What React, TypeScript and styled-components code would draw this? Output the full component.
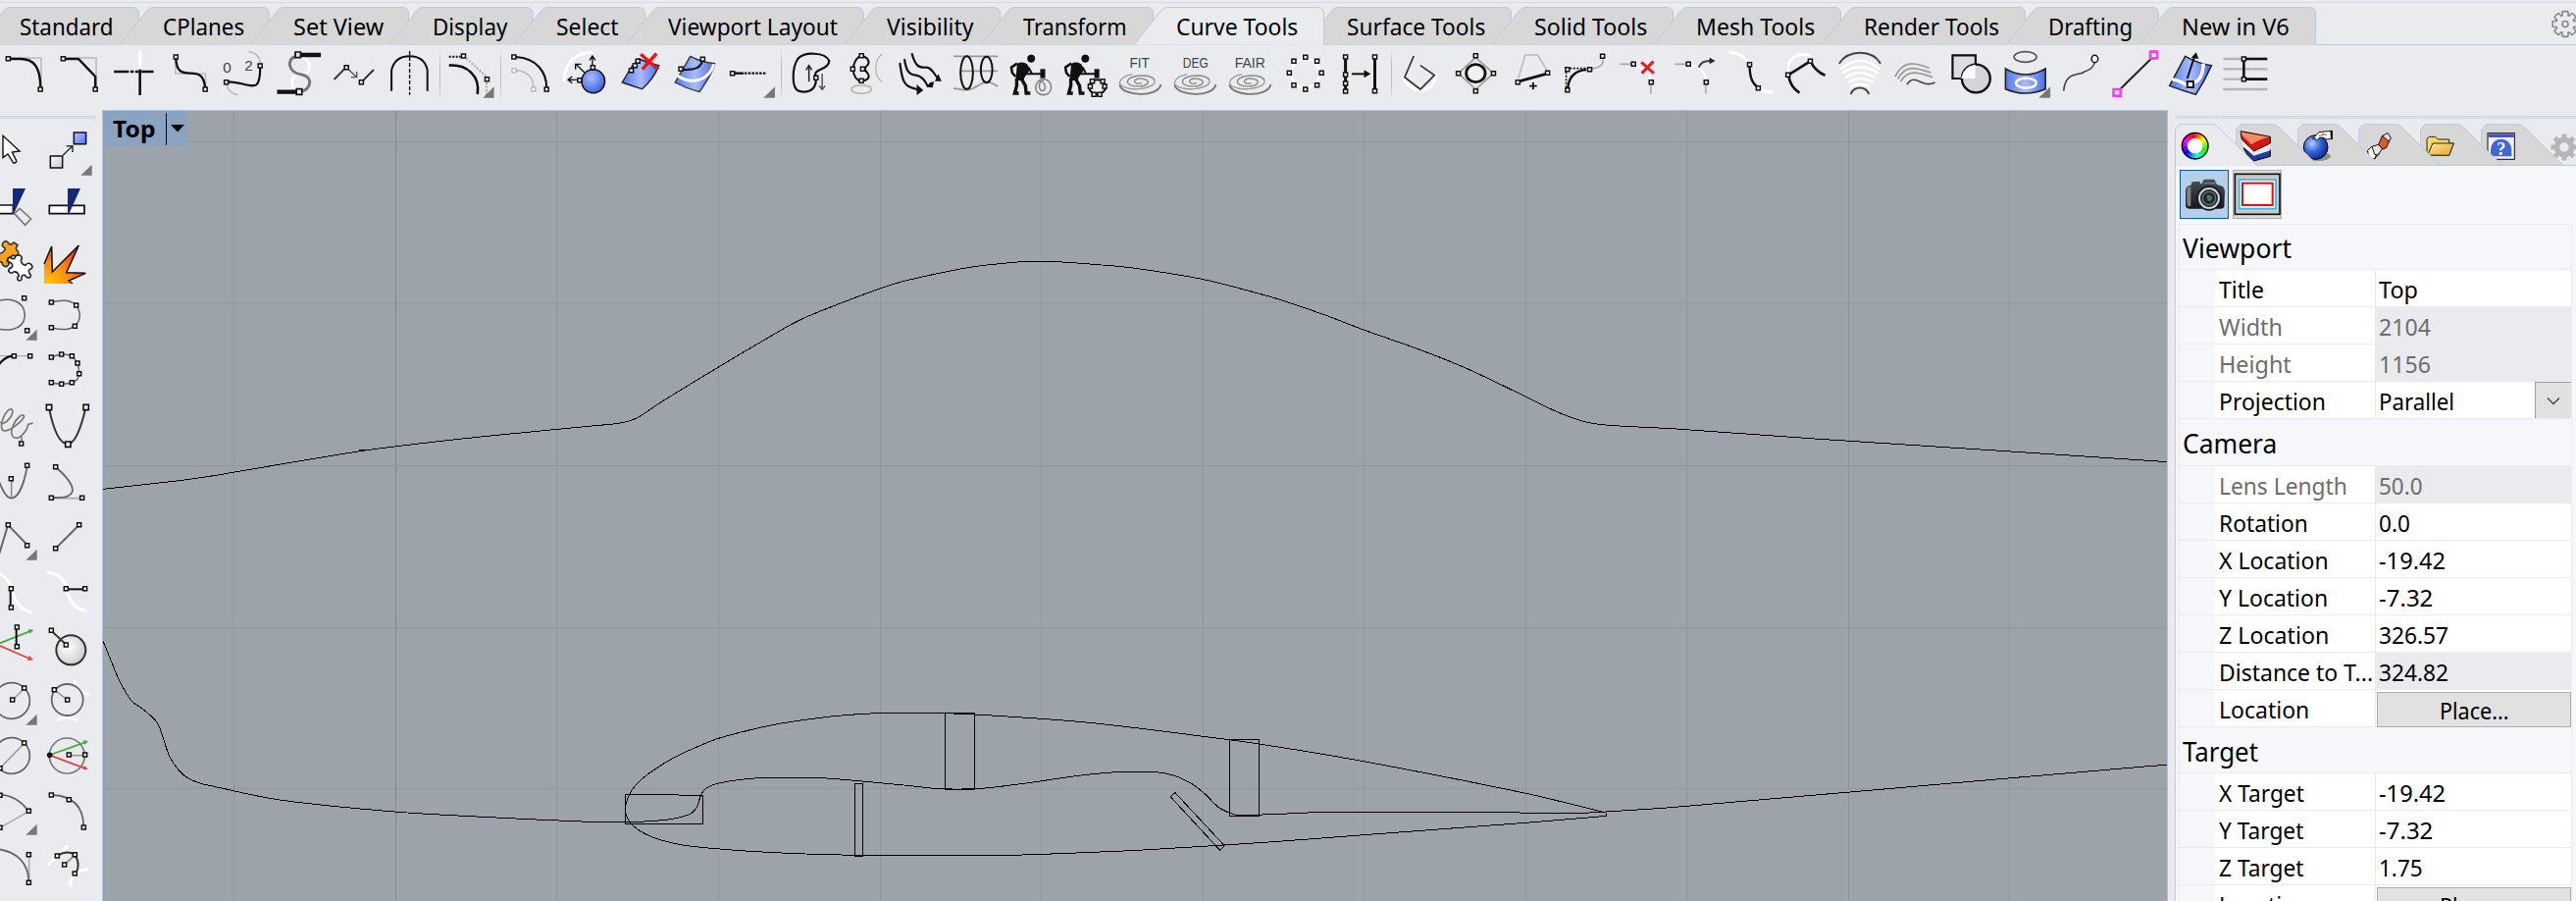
import React, { useLayoutEffect, useRef, useState } from 'react';
import styled, { createGlobalStyle } from 'styled-components';

const Global = createGlobalStyle`
  * { box-sizing: border-box; }
  body { margin: 0; background: #eaebef; color: #000; overflow: hidden;
    font-family: "Noto Sans", "Open Sans", sans-serif; font-size: 24px; line-height: 1; }
`;

const face = '#eaebef';
const edge = '#c0c8dc';

/* ---------- text condensed to a known width ---------- */
const Condensed = styled.span`
  display: inline-block;
  white-space: nowrap;
  transform-origin: left center;
`;
const Slot = styled.span<{ $w: number }>`
  display: inline-block;
  width: ${p => p.$w}px;
  white-space: nowrap;
`;
function Fit({ w, children }: { w: number; children: string }) {
  const ref = useRef<HTMLSpanElement>(null);
  const [k, setK] = useState(1);
  useLayoutEffect(() => {
    if (ref.current) setK(w / ref.current.offsetWidth);
  }, [w, children]);
  return (
    <Slot $w={w}>
      <Condensed ref={ref} style={{ transform: `scaleX(${k})` }}>{children}</Condensed>
    </Slot>
  );
}

/* ---------- page ---------- */
const Window = styled.div`
  display: flex;
  flex-direction: column;
  width: 2626px;
  height: 918px;
  overflow: hidden;
  background: ${face};
`;
const TabStrip = styled.div`
  display: flex;
  justify-content: space-between;
  height: 46px;
  border-bottom: 1px solid ${edge};
`;
const TopRule = styled.div`
  height: 1px;
  flex: none;
  background: #d5d9e7;
  margin: 2px 0 -3px;
`;
const Tabs = styled.div`
  display: flex;
  padding-top: 7px;
  margin-left: -24px;
`;
const Tab = styled.div<{ $on: boolean }>`
  display: grid;
  height: ${p => (p.$on ? 39 : 38)}px;
  z-index: ${p => (p.$on ? 2 : 0)};
  & + & { margin-left: -20px; }
  > * { grid-area: 1 / 1; }
  > svg { display: block; }
`;
const TabText = styled.div`
  padding: 4px 26.5px 0 43.5px;
  line-height: 32px;
`;
const GearSlot = styled.div`
  padding: 10px 0 0;
  width: 25px;
  overflow: hidden;
`;

const tabs: [string, number][] = [
  ['Standard', 96], ['CPlanes', 83], ['Set View', 92], ['Display', 76.5], ['Select', 64],
  ['Viewport Layout', 173], ['Visibility', 89], ['Transform', 106], ['Curve Tools', 124],
  ['Surface Tools', 141], ['Solid Tools', 115], ['Mesh Tools', 121], ['Render Tools', 138],
  ['Drafting', 86], ['New in V6', 110],
];

function TopTab({ name, w, on }: { name: string; w: number; on: boolean }) {
  const W = w + 70;
  return (
    <Tab $on={on}>
      <svg width={W} height={39}>
        <path d={`M0 38.5L28 3.5Q30.500 .5 34 .5H${W - 7}Q${W - 0.5} .5 ${W - 0.5} 7V39`} fill={on ? face : '#d7d7d7'} stroke={edge} />
      </svg>
      <TabText><Fit w={w}>{name}</Fit></TabText>
    </Tab>
  );
}

function Gear() {
  const teeth = Array.from({ length: 8 }, (_, i) => i * 45);
  return (
    <svg width={28} height={29} viewBox="0 0 28 29">
      {teeth.map(t => <rect key={t} x={11} y={1.6} width={6} height={6} rx={1} fill={face} stroke="#858585" strokeWidth={1.6} transform={`rotate(${t} 14 14.500)`} />)}
      <circle cx={14} cy={14.500} r={9.400} fill={face} stroke="#858585" strokeWidth={1.6} />
      {teeth.map(t => <rect key={t} x={11.800} y={4} width={4.400} height={4} fill={face} transform={`rotate(${t} 14 14.500)`} />)}
      <circle cx={14} cy={14.500} r={3} fill="none" stroke="#858585" strokeWidth={1.6} />
    </svg>
  );
}

/* ---------- tool icons ---------- */
const Toolbar = styled.div`
  display: flex;
  height: 66px;
  flex: none;
  padding-top: 2px;
  margin-left: -3px;
`;
const Divider = styled.div`
  width: 1px;
  height: 52px;
  margin: 2px 2px 0 3px;
  background: linear-gradient(${face}, #bdbec3 30%, #bdbec3 70%, ${face});
`;
const Drawing = styled.svg`
  display: block;
  flex: none;
  width: 56px;
  height: 56px;
  overflow: hidden;
  path, rect, ellipse, line, polygon { vector-effect: non-scaling-stroke; }
`;

type Kids = { children?: React.ReactNode };
/* Toolbar glyphs use a grid of 2.376 x 3 units per pixel, palette glyphs one of 3 x 3. */
const Tool = ({ x, u = 2.376, children }: { x: number; u?: number } & Kids) => (
  <Drawing viewBox={`${x} 144 ${56 * u} 168`} preserveAspectRatio="none">{children}</Drawing>
);
const P = ({ d, c = '#111', w = 1.6, f = 'none', dash }: { d: string; c?: string; w?: number; f?: string; dash?: string }) => (
  <path d={d} stroke={c} strokeWidth={w} fill={f} strokeDasharray={dash} />
);
const H = ({ x, y, c = '#111' }: { x: number; y: number; c?: string }) => (
  <rect x={x - 4.8} y={y - 6} width={9.6} height={12} fill="#fff" stroke={c} strokeWidth={1.5} />
);
const Q = ({ x, y }: { x: number; y: number }) => (
  <rect x={x - 6} y={y - 6} width={12} height={12} fill="#fff" stroke="#111" strokeWidth={1.5} />
);
const E = ({ x, y, rx, ry, c = '#111', w = 1.6, f = 'none' }: { x: number; y: number; rx: number; ry: number; c?: string; w?: number; f?: string }) => (
  <ellipse cx={x} cy={y} rx={rx} ry={ry} stroke={c} strokeWidth={w} fill={f} />
);
const T = ({ x, y, s, w, children }: { x: number; y: number; s: number; w: number; children: string }) => (
  <text transform={`translate(${x} ${y}) scale(2.376 3)`} fontFamily="Liberation Sans" fontSize={s} textLength={w} lengthAdjust="spacingAndGlyphs" fill="#444">{children}</text>
);
const Spiral = ({ x }: { x: number }) => (
  <g>
    <P c="#8a8a8a" w={1.4} d={`M${x + 4} 254C${x - 6} 258 ${x - 16} 252 ${x - 12} 245C${x - 4} 236 ${x + 20} 240 ${x + 20} 252C${x + 16} 268 ${x - 26} 268 ${x - 30} 250C${x - 28} 226 ${x + 34} 224 ${x + 36} 248`} />
    <P c="#9a9a9a" w={1.4} d={`M${x + 36} 248C${x + 36} 276 ${x - 40} 282 ${x - 49} 254C${x - 46} 238 ${x - 34} 230 ${x - 18} 227`} />
    <P c="#777" w={1.8} d={`M${x - 49} 260C${x - 42} 294 ${x + 44} 300 ${x + 51} 258`} />
  </g>
);
const Worker = ({ x }: { x: number }) => (
  <g>
    <E x={x} y={179} rx={8.500} ry={11} f="#111" w={1} />
    <path d={`M${x - 34} 194Q${x - 20} 186 ${x - 10} 196L${x - 2} 212L${x - 16} 236L${x - 18} 246H${x - 38}L${x - 36} 222Z`} fill="#111" />
    <P w={2.6} d={`M${x - 34} 194L${x - 48} 206L${x - 46} 222L${x - 38} 234`} />
    <P w={3.4} d={`M${x - 35} 240L${x - 35} 262L${x - 40} 285H${x - 30}M${x - 24} 240L${x - 14} 262L${x - 12} 285H${x - 2}`} />
    <P w={2} d={`M${x - 6} 206L${x + 2} 226H${x + 24}M${x - 20} 226H${x + 4}`} />
    <rect x={x + 22} y={211} width={12} height={28} fill="#111" />
  </g>
);

const toolGroups: React.ReactNode[][] = [
  [
    <Tool x={-7}><P c="#bbb" d="M20 177H100V270" /><P w={2.4} d="M26 180H50C82 180 98 205 98 265" /><H x={20} y={179} /><H x={98} y={273} /></Tool>,
    <Tool x={126}><P c="#bbb" d="M153 177H233V270" /><P w={2.4} d="M158 180H190L231 234V268" /><H x={153} y={179} /><H x={231} y={273} /></Tool>,
    <Tool x={259}><P c="#fff" w={3} d="M339 156V215" /><P w={2.6} d="M339 212V291" /><P w={2.6} d="M276 219H304M344 219H372" /><P w={2.6} dash="3.500 1.500" d="M304 219H344" /></Tool>,
    <Tool x={392}><P c="#bbb" d="M425 180V225H498V268" /><P w={2.4} d="M426 180C428 215 436 224 462 224C488 224 494 238 497 268" /><H x={426} y={174} /><H x={497} y={273} /></Tool>,
    <Tool x={525}><P c="#bbb" d="M602 158Q630 162 630 196M548 258Q556 288 576 290" /><P w={2.2} d="M552 250C590 252 610 270 622 258C630 246 630 220 630 206" /><H x={548} y={251} /><H x={630} y={201} /><T x={540} y={222} s={15} w={8.500}>0</T><T x={592} y={215} s={15} w={8.500}>2</T></Tool>,
    <Tool x={658}><P c="#fff" w={2.5} d="M722 172C760 176 756 228 730 228C700 228 700 272 725 276" /><P c="#777" w={3} d="M718 172C690 180 700 224 730 228C760 234 754 276 727 280" /><P w={4.4} d="M726 168H777M671 281H722" /><rect x={715} y={159} width={13} height={17} fill="#dde6fb" stroke="#111" strokeWidth={1.7} /><rect x={718} y={272} width={13} height={17} fill="#fff" stroke="#111" strokeWidth={1.7} /></Tool>,
    <Tool x={791}><P c="#333" w={2} d="M809 243L838 206M876 250L905 213" /><P c="#555" w={1.4} d="M842 210L864 236M850 236H864V219" /><H x={839} y={206} /><H x={875} y={251} /></Tool>,
    <Tool x={924}><P w={2} d="M948 278V215Q956 172 992 172Q1028 172 1035 215V278" /><P w={1.4} dash="4 2" d="M992 156V290" /></Tool>,
  ],
  [
    <Tool x={1072}><P w={2} dash="2 1.5" d="M1088 173H1118" /><P c="#aaa" w={2} dash="2 1.600" d="M1130 178L1178 234M1179 252V290" /><P w={2.6} d="M1088 200C1130 196 1164 230 1157 288" /><H x={1123} y={171} /><H x={1180} y={242} /><polygon points="1170,299 1197,299 1197,265" fill="#777" /></Tool>,
  ],
  [
    <Tool x={1219}><P w={2.2} d="M1250 174C1300 178 1324 220 1324 268" /><P c="#bbb" w={1.6} d="M1250 215C1280 218 1292 240 1292 266" /><H x={1245} y={174} /><H x={1324} y={273} /><H c="#bbb" x={1245} y={215} /><H c="#bbb" x={1292} y={273} /></Tool>,
    <Tool x={1352}><P c="#fff" w={3} d="M1367 250C1366 190 1396 160 1436 160" /><E x={1437} y={248} rx={28} ry={36} f="url(#ball)" w={1.5} /><P w={1.4} d="M1435 202V172M1428 184L1435 171L1442 184M1398 244H1377M1386 234L1376 244L1386 254M1416 222L1395 196M1408 196H1394V212" /><H x={1436} y={206} /><H x={1404} y={245} /></Tool>,
    <Tool x={1485}><path d="M1507 252L1530 204L1548 180Q1570 194 1596 200Q1584 240 1555 272Q1530 262 1507 252Z" fill="url(#sheet)" stroke="#222" strokeWidth={1.4} /><P w={1.4} d="M1530 215L1548 184" /><H x={1529} y={215} /><H x={1538} y={200} /><H x={1545} y={187} /><P c="#e11" w={3.4} d="M1552 166L1594 212M1590 164L1556 212" /></Tool>,
    <Tool x={50}><path d="M67 252L104 172Q130 190 163 194Q160 220 126 281Q94 270 67 252Z" fill="url(#sheet)" stroke="#333" strokeWidth={1.4} /><P c="#fff" w={3} d="M73 232C110 262 150 244 161 196" /><P w={2} d="M80 212C116 216 132 206 133 182" /><H x={81} y={211} /><H x={134} y={181} /></Tool>,
    <Tool x={183}><P w={2.4} d="M211 224H233" /><P w={2.4} dash="2.500 1.300" d="M235 224H289" /><H x={206} y={224} /><polygon points="281,299 309,299 309,265" fill="#777" /></Tool>,
  ],
  [
    <Tool x={330}><P w={2.2} d="M407 232C400 210 440 214 440 186C430 158 378 158 364 180C350 206 348 270 366 278C388 286 408 276 408 244" /><P c="#222" w={1.5} d="M391 250V200M384 214L391 200L398 214" /><P c="#555" w={1.5} d="M423 225V272M416 262L423 274L430 262" /><H x={408} y={238} /></Tool>,
    <Tool x={463}><E x={518} y={273} rx={24} ry={13} c="#bbb" w={2} /><P c="#bbb" w={1.5} d="M568 166C548 180 548 236 568 250" /><P w={2} d="M518 170C500 178 500 200 497 210C500 236 506 246 518 248C530 246 542 240 532 222Q522 210 532 200C540 190 534 174 518 170Z" /><H x={518} y={170} /><H x={497} y={211} /><H x={521} y={211} /><H x={518} y={247} /></Tool>,
    <Tool x={596}><P w={2.2} d="M611 192C616 240 620 262 640 268Q650 272 660 276M622 180C626 214 632 228 650 230Q668 234 678 262L690 262M640 163C648 200 656 208 674 206C690 206 692 226 704 240" /><path d="M652 258L668 276L652 291ZM684 252L694 250L690 268L676 266ZM704 226L712 248L696 248Z" fill="#111" /></Tool>,
    <Tool x={729}><P c="#999" w={1.8} d="M741 172H848M756 217H848" /><P c="#999" w={1.8} d="M741 270C770 276 780 280 800 262S830 250 848 264" /><E x={773} y={222} rx={15} ry={50} w={2} /><E x={821} y={213} rx={14} ry={40} w={2} /></Tool>,
    <Tool x={862}><Worker x={929} /><P c="#888" w={1.6} d="M956 250C968 262 962 284 952 276C944 262 950 246 962 242C982 246 984 290 958 290C934 290 934 246 958 242" /></Tool>,
    <Tool x={996}><Worker x={1061} /><E x={1090} y={266} rx={20} ry={22} w={2} /><H x={1073} y={264} /><H x={1108} y={264} /><H x={1078} y={248} /><H x={1103} y={248} /><H x={1082} y={289} /><H x={1096} y={289} /></Tool>,
    <Tool x={1129}><T x={1168} y={206} s={15} w={20.500}>FIT</T><Spiral x={1193} /></Tool>,
    <Tool x={1262}><T x={1297} y={206} s={15} w={26}>DEG</T><Spiral x={1326} /></Tool>,
    <Tool x={1395}><T x={1423} y={206} s={15} w={31}>FAIR</T><Spiral x={1459} /></Tool>,
    <Tool x={-40}><E x={26} y={224} rx={34} ry={44} c="#fff" w={2.4} /><H x={26} y={175} /><H x={54} y={187} /><H x={65} y={223} /><H x={54} y={260} /><H x={26} y={273} /><H x={-2} y={260} /><H x={-13} y={223} /><H x={-2} y={187} /></Tool>,
    <Tool x={93}><P w={3} d="M123 174V280M194 174V278" /><P w={2} d="M138 226H176" /><path d="M168 214L184 226L168 238Z" fill="#111" /><H x={123} y={174} /><H x={123} y={228} /><H x={123} y={255} /><H x={123} y={279} /><H x={194} y={174} /><H x={194} y={278} /></Tool>,
  ],
  [
    <Tool x={240}><P c="#fff" w={3} d="M262 240Q280 276 306 276Q342 270 340 224" /><P c="#333" w={1.7} d="M288 171L266 236L304 273L338 230L304 200" /></Tool>,
    <Tool x={373}><P c="#999" w={1.6} d="M438 176L396 224L438 273L481 224Z" /><E x={438} y={224} rx={23} ry={27} w={2.8} f="#f0f1f4" /><H x={438} y={170} /><H x={396} y={224} /><H x={481} y={224} /><H x={438} y={278} /></Tool>,
    <Tool x={506}><P c="#bbb" w={1.6} d="M541 240L558 168H588L612 218" /><P w={2.8} d="M545 248L608 226" /><H x={540} y={251} /><H x={612} y={223} /><P w={1.8} d="M577 252V274M568 263H586" /></Tool>,
    <Tool x={639}><P w={1.6} dash="2 1.500" d="M666 209H706M657 220V266" /><P w={2.4} d="M661 268C664 224 690 214 706 213" /><P c="#aaa" w={1.6} d="M720 210Q748 206 746 182" /><H x={660} y={212} /><H x={714} y={212} /><H x={745} y={172} /><H x={660} y={275} /></Tool>,
    <Tool x={772}><P c="#fff" w={2.4} d="M828 204Q856 210 862 242" /><P c="#aaa" d="M788 196H815M862 258V287" /><H x={820} y={196} /><H x={863} y={251} /><P c="#e32020" w={3} d="M839 190L869 224M868 188L840 224" /></Tool>,
    <Tool x={905}><P c="#fff" w={2.4} d="M960 200Q990 206 995 242" /><P c="#aaa" d="M920 196H948M995 258V287" /><P c="#444" w={2} d="M978 206Q984 184 1008 186" /><path d="M1004 176L1018 186L1004 196Z" fill="#222" /><H x={953} y={196} /><H x={996} y={251} /></Tool>,
    <Tool x={1038}><P c="#fff" w={3} d="M1051 160C1078 162 1096 178 1100 198M1122 270Q1136 282 1158 282" /><P w={2.4} d="M1101 202C1102 244 1110 258 1122 268" /><H x={1101} y={197} /><H x={1122} y={269} /></Tool>,
    <Tool x={1171}><P c="#fff" w={2.4} d="M1193 222C1192 180 1216 158 1248 170" /><P w={2.6} d="M1195 229L1248 187Q1262 220 1284 230M1195 230Q1200 266 1222 284" /><H x={1248} y={187} /><H x={1194} y={229} /></Tool>,
    <Tool x={1304}><P c="#fff" w={2.4} d="M1322 210Q1368 160 1416 210M1326 224Q1368 186 1412 224M1332 238Q1368 208 1406 238M1340 252Q1368 228 1400 252M1344 266Q1368 248 1394 266" /><P c="#444" w={2} d="M1318 194C1340 150 1398 150 1418 194M1346 288C1354 262 1382 262 1390 288" /></Tool>,
    <Tool x={1437}><P c="#999" w={1.7} d="M1453 234C1474 184 1500 190 1536 208M1460 242C1478 196 1504 206 1540 222M1467 249C1484 212 1508 220 1544 236" /><P c="#444" w={1.7} d="M1482 258C1494 236 1504 244 1518 252Q1534 262 1550 252" /></Tool>,
    <Tool x={2} u={2.427}><rect x={25} y={169} width={57} height={71} fill="#dcdde0" stroke="#111" strokeWidth={2.2} /><E x={83} y={240} rx={35} ry={43} w={2.4} f="#d4d5d8" /><path d="M46 240Q52 202 81 197V240Z" fill="#fafafa" /></Tool>,
    <Tool x={138} u={2.427}><E x={205} y={174} rx={28} ry={16} c="#555" /><path d="M156 210Q205 246 255 210V272Q205 298 156 272Z" fill="url(#sheet)" stroke="#222" strokeWidth={1.6} /><E x={207} y={254} rx={25} ry={15} c="#fff" w={2.4} /><polygon points="238,299 267,299 267,265" fill="#777" /></Tool>,
    <Tool x={274} u={2.427}><P c="#444" w={1.6} d="M300 278C304 216 340 232 350 220Q374 210 376 192" /><E x={377} y={180} rx={8} ry={11} f="#fff" w={1.5} /></Tool>,
    <Tool x={410} u={2.427}><P c="#222" w={2} d="M439 274L518 178" />{[[523, 168], [432, 283]].map(([x, y]) => <rect key={x} x={x - 8.500} y={y - 10} width={17} height={20} fill="#fff" stroke="#ff3cf0" strokeWidth={2.6} />)}</Tool>,
    <Tool x={546} u={2.427}><path d="M562 262L601 172Q632 194 666 200Q650 246 627 289Q592 276 562 262Z" fill="url(#sheet)" stroke="#222" strokeWidth={1.5} /><P c="#fff" w={3.4} d="M568 242Q596 248 612 270M646 194Q644 246 622 252" /><P w={2} d="M606 240L624 172" /><path d="M616 176L628 160L634 180Z" fill="#111" /><rect x={606} y={249} width={15} height={18} fill="#fff" stroke="#111" strokeWidth={2} /></Tool>,
    <Tool x={682} u={2.427}><P c="#b4b4b8" w={2.4} d="M695 180H804M695 211H804M695 242H804M695 273H804" /><P w={2.6} d="M804 180H746V242H804" /><H x={746} y={180} /><H x={746} y={242} /></Tool>,
  ],
];

/* ---------- left palette ---------- */
const Main = styled.div`
  display: flex;
  flex: 1;
  min-height: 0;
`;
const Palette = styled.div`
  width: 104px;
  flex: none;
  padding-top: 6px;
  overflow: hidden;
`;
const Grip = styled.div<{ $w: string }>`
  height: 3px;
  width: ${p => p.$w};
  border: solid #cbd5e6;
  border-width: 1px 0;
`;
const PaletteGrid = styled.div`
  display: grid;
  grid-template-columns: 56px 56px;
  grid-auto-rows: 56px;
  margin: 4px 0 0 -16px;
`;
const Pal = ({ c, y, tri, children }: { c: 0 | 1; y: number; tri?: boolean } & Kids) => (
  <Drawing viewBox={`${c ? 120 : -48} ${y} 168 168`}>
    {children}
    {tri && <polygon points={c ? `247,${y + 161} 281,${y + 161} 281,${y + 128}` : `79,${y + 161} 113,${y + 161} 113,${y + 128}`} fill="#77777b" />}
  </Drawing>
);
const g = '#666';
const palette: React.ReactNode[] = [
  <Pal c={0} y={60}><P f="#fff" w={1.4} d="M9 100V167L24 156L41 183Q50 184 50 176L37 150L60 147Z" /></Pal>,
  <Pal c={1} y={60} tri><P w={1.5} c="#333" d="M192 160L222 131M203 131H222V150" /><rect x={154} y={162} width={37} height={36} fill="url(#plate)" stroke="#111" strokeWidth={1.5} /><rect x={226} y={90} width={37} height={35} fill="url(#plateBlue)" stroke="#111" strokeWidth={1.5} /></Pal>,
  <Pal c={0} y={228}><rect x={-20} y={312} width={60} height={26} fill="#fff" stroke="#111" strokeWidth={1.6} /><path d="M39 261H78L42 338H39Z" fill="#132878" /><P c="#777" w={1.6} d="M44 338L60 322L95 354L77 373Z" /></Pal>,
  <Pal c={1} y={228}><rect x={151} y={313} width={107} height={25} fill="#fff" stroke="#111" strokeWidth={1.7} /><path d="M207 261H246L211 338H207Z" fill="#132878" /></Pal>,
  <Pal c={0} y={396}>
    <P f="#ffa11a" c="#333" d="M-20 462L6 458Q18 450 14 442Q2 438 10 426Q20 418 26 428Q32 438 42 426L54 434Q44 446 54 452Q60 460 50 468Q38 462 34 470Q20 472 22 484Q34 490 20 500Q8 500 6 488Q0 482 -20 486Z" />
    <P f="#fff" c="#222" d="M24 484Q22 468 34 474Q46 480 46 470Q52 462 62 466Q70 472 64 482Q66 494 78 496Q84 486 94 492Q102 500 96 506Q84 508 90 520Q98 528 90 534Q80 534 76 526Q66 524 66 534Q68 544 56 542Q50 534 58 528Q54 514 42 516Q34 524 26 514Q26 506 36 502Q44 492 24 484Z" />
  </Pal>,
  <Pal c={1} y={396}><path d="M135 552V492L158 438L160 516L241 435L203 518L262 520L210 543L222 552Z" fill="url(#flame)" /><P w={1.5} d="M135 492L158 438L160 516L241 435L203 518L262 520L210 543L222 552" /></Pal>,
  <Pal c={0} y={564} tri><P c={g} w={1.5} d="M-10 606C20 596 76 596 76 652C70 702 10 694 -10 690" /><Q x={74} y={596} /><Q x={83} y={695} /></Pal>,
  <Pal c={1} y={564}><P c={g} w={1.5} d="M157 609C190 600 216 600 233 618C248 640 248 662 229 682C212 694 186 694 157 686" /><Q x={157} y={609} /><Q x={233} y={618} /><Q x={229} y={682} /><Q x={157} y={686} /></Pal>,
  <Pal c={0} y={732}><P c="#aaa" w={1.4} d="M-10 773H92" /><P w={2.2} d="M-10 810Q10 774 42 773" /><Q x={43} y={773} /><Q x={92} y={773} /></Pal>,
  <Pal c={1} y={732}><P c={g} w={1.5} d="M157 777Q190 762 220 773Q240 790 243 826Q240 850 220 855Q190 862 157 855" />{[[157, 777], [188, 768], [220, 773], [237, 795], [242, 827], [220, 854], [188, 859], [157, 854]].map(([x, y]) => <Q key={`${x}${y}`} x={x} y={y} />)}</Pal>,
  <Pal c={0} y={900}><P c="#777" w={1.7} d="M2 974C4 984 20 980 36 954C44 930 30 930 16 950C0 980 2 1002 14 1002C34 1002 70 970 74 958C70 946 50 962 40 986C26 1020 46 1032 64 1018Q84 1000 86 982L101 978" /><P c="#777" d="M66 1020V1034" /><Q x={65} y={1041} /></Pal>,
  <Pal c={1} y={900}><P w={2} c="#333" d="M150 932Q172 1042 207 1042Q236 1042 262 932" /><rect x={142} y={922} width={16} height={16} fill="#fff" stroke="#111" strokeWidth={1.6} /><rect x={255} y={922} width={16} height={16} fill="#fff" stroke="#111" strokeWidth={1.6} /><rect x={200} y={1035} width={16} height={16} fill="#fff" stroke="#111" strokeWidth={1.6} /></Pal>,
  <Pal c={0} y={1068}><P c="#888" w={1.5} d="M35 1154V1205" /><P c={g} w={1.8} d="M-6 1150C14 1200 24 1208 36 1208C54 1206 72 1172 83 1112" /><Q x={34} y={1148} /><Q x={83} y={1108} /></Pal>,
  <Pal c={1} y={1068}><P c="#aaa" d="M164 1208H246" /><P c={g} w={1.8} d="M174 1116Q222 1158 222 1184C218 1206 194 1206 162 1206" /><Q x={170} y={1112} /><Q x={157} y={1207} /><Q x={251} y={1207} /></Pal>,

  <Pal c={0} y={21} tri><P c={g} w={2} d="M24 76L-2 162M24 74L84 136" /><Q x={25} y={74} /><Q x={83} y={137} /></Pal>,
  <Pal c={1} y={21}><P c={g} w={2} d="M241 76L170 146" /><Q x={242} y={74} /><Q x={170} y={146} /></Pal>,
  <Pal c={0} y={189}><P c="#fff" w={3} d="M-6 222Q30 236 38 280Q56 334 96 342" /><P w={2} d="M32 272V324" /><Q x={34} y={269} /><Q x={34} y={327} /></Pal>,
  <Pal c={1} y={189}><P c="#fff" w={3} d="M144 218C180 224 200 240 205 274C214 314 234 334 264 336" /><P w={2} d="M206 271H256" /><Q x={202} y={269} /><Q x={260} y={269} /></Pal>,
  <Pal c={0} y={357}><P c="#48a848" w={1.8} d="M-10 440L90 400" /><path d="M86 393L103 395L92 407Z" fill="#48a848" /><P c="#e04848" w={1.8} d="M-10 440L90 483" /><path d="M84 490L102 487L90 474Z" fill="#e04848" /><P w={2} d="M50 392V442" /><Q x={52} y={387} /><Q x={52} y={446} /></Pal>,
  <Pal c={1} y={357}><E x={217} y={457} rx={45} ry={45} f="url(#pearl)" c="#333" w={2} /><P c="#333" w={1.8} d="M161 402L200 438" /><Q x={157} y={397} /><Q x={202} y={441} /></Pal>,
  <Pal c={0} y={525} tri><E x={36} y={612} rx={55} ry={55} c={g} w={1.7} /><P c="#999" w={1.5} d="M40 608L72 576" /><Q x={38} y={609} /><Q x={74} y={573} /></Pal>,
  <Pal c={1} y={525}><P c="#fff" w={3} d="M228 548Q234 586 272 591M172 672Q205 652 238 672" /><E x={206} y={609} rx={48} ry={48} c={g} w={1.8} /><P c="#999" w={1.5} d="M168 580L205 608" /><Q x={166} y={578} /><Q x={206} y={609} /></Pal>,
  <Pal c={0} y={693}><E x={36} y={780} rx={55} ry={55} c={g} w={1.7} /><P c="#999" w={1.5} d="M0 818L74 742" /><Q x={0} y={818} /><Q x={74} y={741} /></Pal>,
  <Pal c={1} y={693}><E x={205} y={780} rx={54} ry={54} c="#777" w={1.7} /><P c="#48a848" w={1.8} d="M154 777L258 740" /><path d="M254 733L270 735L259 747Z" fill="#48a848" /><P c="#e04848" w={1.8} d="M154 779L258 818" /><path d="M254 823L270 821L258 810Z" fill="#e04848" /><P c="#999" d="M212 779H260" /><E x={152} y={778} rx={6} ry={6} f="#111" /><Q x={211} y={777} /><Q x={260} y={777} /></Pal>,
  <Pal c={0} y={861} tri><P c={g} w={1.8} d="M0 899Q52 902 86 948" /><P c="#aaa" w={1.6} d="M88 950L0 1000" /><Q x={0} y={901} /><Q x={88} y={949} /><Q x={0} y={1000} /></Pal>,
  <Pal c={1} y={861}><P c={g} w={1.8} d="M160 900Q254 904 256 996" /><Q x={157} y={900} /><Q x={211} y={914} /><Q x={256} y={999} /></Pal>,
  <Pal c={0} y={1029}><P c="#aaa" w={1.5} d="M89 1086V1164" /><P c={g} w={1.8} d="M-4 1066C54 1074 86 1110 88 1162" /><Q x={88} y={1082} /><Q x={88} y={1168} /></Pal>,
  <Pal c={1} y={1029}><P c="#fff" w={3} d="M146 1116L208 1054M214 1180Q218 1130 270 1127" /><P c="#333" w={2} d="M176 1085Q204 1068 228 1082Q248 1110 232 1140" /><P c="#888" d="M198 1112L228 1084" /><Q x={175} y={1086} /><Q x={229} y={1082} /><Q x={197} y={1113} /><Q x={229} y={1140} /></Pal>,
];

/* ---------- viewport ---------- */
const Viewport = styled.div`
  display: grid;
  width: 2106px;
  flex: none;
  border: solid #b4c0d6;
  border-width: 1px 1px 0;
  background: #9ca3ab;
  > * { grid-area: 1 / 1; }
  > svg { display: block; }
`;
const ViewTitle = styled.div`
  display: flex;
  align-items: center;
  width: 86px;
  height: 36px;
  padding-left: 10px;
  border-radius: 0 0 4px 0;
  background: #8aa3c0;
  font-weight: 700;
  font-size: 23px;
  z-index: 1;
`;
const Arrow = styled.div`
  display: flex;
  align-items: center;
  height: 33px;
  margin-left: 10px;
  padding-left: 4px;
  border-left: 1px solid #000;
`;

type Pt = [number, number];
/* Catmull-Rom spline through the given points */
function spline(p: Pt[]): string {
  let d = `M${p[0][0]} ${p[0][1]}`;
  for (let i = 0; i < p.length - 1; i++) {
    const a = p[i - 1] || p[i], b = p[i], c = p[i + 1], e = p[i + 2] || c;
    const bc = Math.hypot(c[0] - b[0], c[1] - b[1]);
    const k1 = bc / (Math.hypot(b[0] - a[0], b[1] - a[1]) + bc) / 3;
    const k2 = bc / (Math.hypot(e[0] - c[0], e[1] - c[1]) + bc) / 3;
    d += `C${b[0] + (c[0] - a[0]) * k1} ${b[1] + (c[1] - a[1]) * k1} ${c[0] - (e[0] - b[0]) * k2} ${c[1] - (e[1] - b[1]) * k2} ${c[0]} ${c[1]}`;
  }
  return d;
}
const roof: Pt[] = [[105, 498.3], [184, 489.5], [220, 484.3], [295, 471.5], [372, 459], [440, 450.5], [502, 443.8], [600, 434.3], [625, 432], [636, 430.3], [646, 427.3], [655, 422.5], [671, 411.5], [732.5, 374], [790, 340], [814, 326.7], [840.7, 315.3], [897.5, 293.8], [924.3, 285.7], [989.3, 272.3], [1041, 266.7], [1061, 266.2], [1079, 266.7], [1135.7, 271], [1160, 273.7], [1226.5, 284.6], [1289, 300.7], [1314, 308.3], [1353.6, 322], [1390, 336], [1450, 357.3], [1496.4, 376], [1555, 404], [1588, 420], [1614, 429.3], [1634, 432.7], [1664, 434.7], [1709, 437], [1850, 447], [2027, 458.5], [2195, 469.7], [2209, 470.5]];
const belly: Pt[] = [[105, 653], [113.3, 673.3], [121.7, 693.3], [134, 714], [146.7, 723.3], [160, 736], [166.7, 753.3], [173.3, 771.7], [186.7, 789.3], [201.7, 797.3], [220, 801.7], [285, 815], [402, 827], [502, 832.8], [600, 837.3], [630, 837.6], [657, 837], [685.7, 834.3], [703.6, 829.3], [710.7, 821.7], [714.3, 810.7], [719.6, 803.3], [734.3, 797.7], [763, 793.5], [785.7, 792.4], [835, 792.6], [878.6, 796], [921.4, 800], [959, 803.7], [1000, 803.3], [1048, 797.7], [1096.4, 790.7], [1139, 786.6], [1177, 786.6], [1196.4, 790], [1215, 798.7], [1228, 808.7], [1242, 822.3], [1253.6, 828.3], [1262, 830.4], [1298, 829.6], [1351, 827.5], [1532, 827.9], [1612, 828.3], [1640, 826.8], [1708, 822.3], [2010, 796.2], [2190, 780.7], [2209, 779.3]];
const foil: Pt[] = [[1634, 827.3], [1555.4, 808.3], [1390, 775.7], [1283.6, 758], [1226.4, 750.3], [1150, 740.7], [1096, 735], [1010.7, 729], [959, 726.6], [907, 726.5], [879.6, 727.4], [841, 730.7], [794.6, 737.3], [763.6, 744], [732.5, 752.3], [714, 759.500], [687.5, 771.7], [662.5, 787.3], [648, 800], [640, 812.7], [637.5, 824], [639.3, 832.7], [644.6, 840.7], [657, 849.3], [673, 855.7], [698, 861.3], [732.5, 864.9], [771.4, 867.7], [821.4, 870], [878.6, 871.4], [950, 871.7], [1025, 871.4], [1064, 870.3], [1121, 868], [1160, 866.3], [1235.7, 861.7], [1298, 857.7], [1390, 850.7], [1555.4, 838.3], [1637.5, 831.4]];
const gridX = [238, 403, 567, 732, 897, 1061, 1226, 1390, 1555, 1719, 1884, 2048];
const gridY = [144, 308, 474, 639, 803];

function Scene() {
  return (
    <svg width={2104} height={805} viewBox="105 113 2104 805" shapeRendering="crispEdges">
      {gridX.map(x => <rect key={x} x={x} y={113} width={1} height={805} fill={x === 403 ? '#7f8790' : '#8e969f'} />)}
      {gridY.map(y => <rect key={y} x={105} y={y} width={2104} height={1} fill="#8e969f" />)}
      <g fill="none" stroke="#000" strokeWidth={1}>
        <path d={spline(roof)} />
        <path d="M366 458.500H378M2020 458.500H2035" />
        <path d={spline(belly)} />
        <path d={spline(foil) + 'V827.5'} />
        <path d="M637.5 809.5H667L716.5 810.5V839.5H637.5Z" />
        <path d="M871.5 798.5H879.5V872.5H871.5Z" />
        <path d="M963.5 726.5H993.5V804.5H963.5Z" />
        <path d="M1253.5 753.5H1283.5V831.5H1253.5Z" />
        <path d="M1197.9 807.5L1193.2 811.7L1243.6 866.3L1248.2 861.7Z" />
      </g>
    </svg>
  );
}

/* ---------- properties panel ---------- */
const Panel = styled.div`
  display: flex;
  flex-direction: column;
  width: 416px;
  padding: 6px 0 0 7px;
`;
const PanelTabs = styled.div`
  display: flex;
  height: 48px;
  padding-top: 5px;
  border-bottom: 1px solid ${edge};
`;
const PanelTab = styled.div<{ $z: number }>`
  z-index: ${p => p.$z};
  width: 62.4px;
  flex: none;
  height: 43px;
  > svg { display: block; overflow: visible; }
`;
const PanelGear = styled.div`
  padding-top: 10px;
  margin-left: 9px;
  width: 26px;
  overflow: hidden;
  z-index: 9;
  svg { display: block; }
`;
const PanelBody = styled.div`
  flex: 1;
  border-left: 1px solid ${edge};
  background: #f6f7fa;
  padding: 4px 4px 0 4px;
  overflow: hidden;
`;
const Modes = styled.div`
  display: flex;
  gap: 4px;
  height: 55px;
`;
const Mode = styled.div<{ $on?: boolean }>`
  width: 50px;
  height: 50px;
  border: 1px solid ${p => (p.$on ? '#0b55a5' : '#ababab')};
  background: ${p => (p.$on ? '#b5cfe8' : '#dcdcdc')};
  > svg { display: block; }
`;
const Sheet = styled.div`
  border: solid #e9ebf0;
  border-width: 1px 1px 0;
  margin-left: -1px;
`;
const Heading = styled.div<{ $h: number }>`
  height: ${p => p.$h}px;
  padding: 3px 0 0 3px;
  display: flex;
  align-items: center;
  font-size: 27.500px;
  border-bottom: 1px solid #e9ebf0;
`;
const Row = styled.div`
  display: grid;
  grid-template-columns: 36px 163px 1fr;
  height: 38px;
`;
const Cell = styled.div<{ $bg?: string; $dim?: boolean; $line?: boolean }>`
  display: flex;
  align-items: center;
  padding: 3px 0 0 ${p => (p.$line ? 3 : 4)}px;
  background: ${p => p.$bg || 'transparent'};
  color: ${p => (p.$dim ? '#6d6d6d' : '#000')};
  border-bottom: 1px solid #e9ebf0;
  border-left: ${p => (p.$line ? '1px solid #e9ebf0' : '0')};
`;
const ButtonCell = styled(Cell)`
  padding: 1px 0 0 1px;
  border-bottom: 0;
`;
const PlaceButton = styled.div`
  display: flex;
  justify-content: center;
  align-items: center;
  width: 100%;
  height: 36px;
  padding-top: 2px;
  border: 1px solid #adadad;
  background: #e1e1e1;
`;
const DropButton = styled.div`
  display: flex;
  justify-content: center;
  align-items: center;
  width: 37px;
  height: 37px;
  margin: -3px 0 0 auto;
  border: solid #a0a0a0;
  border-width: 1px 0 0 1px;
  background: #e1e1e1;
`;

const PanelIcon = [
  <g>
    {Array.from({ length: 24 }, (_, i) => {
      const a = (i * Math.PI) / 12, b = ((i + 1.1) * Math.PI) / 12;
      const pt = (t: number, r: number) => `${144 + r * Math.cos(t)} ${116 - r * Math.sin(t)}`;
      return <path key={i} d={`M${pt(a, 40)}L${pt(b, 40)}L${pt(b, 23)}L${pt(a, 23)}Z`} fill={`hsl(${360 - ((i * 15 + 270) % 360)} 100% 50%)`} />;
    })}
    <circle cx={144} cy={116} r={40} fill="none" stroke="#000" strokeWidth={4} />
    <circle cx={144} cy={116} r={23} fill="#fff" />
  </g>,
  <g stroke="#000" strokeWidth={3} strokeLinejoin="round">
    <path d="M292 122L324 144L374 126V148L324 162Q302 146 292 122Z" fill="#1d3f9e" />
    <path d="M288 96L324 132L374 106V130L324 146L290 118Z" fill="#e8e8ee" stroke="none" />
    <path d="M283 71L374 88V108L324 132L287 96Z" fill="#d81414" />
    <path d="M284 73L372 89Q342 94 316 112L288 84Z" fill="#ff8a5c" stroke="none" />
  </g>,
  <g>
    <ellipse cx={514} cy={148} rx={42} ry={14} fill="#8e8e8e" />
    <circle cx={510} cy={120} r={37} fill="url(#ballDark)" stroke="#000" strokeWidth={3} />
    <path d="M500 94L520 74L538 72L560 70V94L544 96L530 90L520 92L512 100L508 92Z" fill="#fff" stroke="#111" strokeWidth={3} />
    <path d="M554 70H562V96H556Z" fill="#111" />
    <path d="M520 86L534 82M530 78L544 84" stroke="#111" strokeWidth={2} />
  </g>,
  <g stroke="#111" strokeWidth={3}>
    <path d="M668 130L682 118L700 132L690 156L674 154Z" fill="#fff" />
    <path d="M682 118L702 112L714 124L700 144L690 142Z" fill="#e5e5e5" />
    <path d="M702 112L714 84L738 94L726 122L714 126Z" fill="#d95a28" />
    <path d="M714 86L730 76L740 92L734 102Z" fill="#ddd" />
    <path d="M690 156L706 138" />
  </g>,
  <g stroke="#222" strokeWidth={3}>
    <path d="M850 144V94L858 88H876L884 96H918V108H932L918 144Z" fill="#f6d862" />
    <path d="M852 144L868 108H932L918 145Z" fill="url(#gold)" />
  </g>,
  <g>
    <rect x={1039} y={77} width={82} height={80} fill="#eef0fa" stroke="#111" strokeWidth={3} />
    <rect x={1041} y={79} width={78} height={11} fill="#4a55b8" />
    <path d="M1048 148V126Q1052 96 1080 95Q1108 96 1112 126V148Z" fill="#4166d8" />
    <text x={1067} y={144} fontFamily="Liberation Serif" fontWeight={700} fontSize={54} fill="#fff">?</text>
  </g>,
];
const tabX = [82, 268, 454, 640, 829, 1018];

type RowData = { k: string; kw: number; v?: string; vw?: number; dim?: boolean; grey?: boolean; kind?: 'drop' | 'button' };
const sections: { name: string; w: number; h: number; rows: RowData[] }[] = [
  { name: 'Viewport', w: 111, h: 46, rows: [
    { k: 'Title', kw: 46, v: 'Top', vw: 40 },
    { k: 'Width', kw: 65, v: '2104', vw: 53, dim: true, grey: true },
    { k: 'Height', kw: 74, v: '1156', vw: 53, dim: true, grey: true },
    { k: 'Projection', kw: 109, v: 'Parallel', vw: 77, kind: 'drop' },
  ] },
  { name: 'Camera', w: 96, h: 48, rows: [
    { k: 'Lens Length', kw: 131, v: '50.0', vw: 45, dim: true, grey: true },
    { k: 'Rotation', kw: 91, v: '0.0', vw: 32 },
    { k: 'X Location', kw: 112, v: '-19.42', vw: 68 },
    { k: 'Y Location', kw: 111, v: '-7.32', vw: 55 },
    { k: 'Z Location', kw: 112, v: '326.57', vw: 71 },
    { k: 'Distance to T...', kw: 157, v: '324.82', vw: 71, grey: true },
    { k: 'Location', kw: 92, kind: 'button' },
  ] },
  { name: 'Target', w: 77, h: 47, rows: [
    { k: 'X Target', kw: 87, v: '-19.42', vw: 68 },
    { k: 'Y Target', kw: 86, v: '-7.32', vw: 55 },
    { k: 'Z Target', kw: 87, v: '1.75', vw: 45 },
    { k: 'Location', kw: 92, kind: 'button' },
  ] },
];

function Property({ r }: { r: RowData }) {
  return (
    <Row>
      <Cell />
      <Cell $bg="#fff" $dim={r.dim}><Fit w={r.kw}>{r.k}</Fit></Cell>
      {r.kind === 'button' ? (
        <ButtonCell $bg="#fff" $line><PlaceButton><Fit w={71}>Place...</Fit></PlaceButton></ButtonCell>
      ) : (
        <Cell $bg={r.grey ? '#eaebef' : '#fff'} $dim={r.dim} $line>
          <Fit w={r.vw!}>{r.v!}</Fit>
          {r.kind === 'drop' && (
            <DropButton><svg width={14} height={9}><path d="M1 1.500L7 7.500L13 1.500" fill="none" stroke="#444" strokeWidth={1.400} /></svg></DropButton>
          )}
        </Cell>
      )}
    </Row>
  );
}

const Defs = styled.svg`
  position: absolute;
  width: 0;
  height: 0;
`;

export default function App() {
  return (
    <Window>
      <Global />
      <Defs>
        <defs>
          <radialGradient id="ball" cx=".4" cy=".35" r=".7"><stop offset="0" stopColor="#a9bdff" /><stop offset="1" stopColor="#3a5ee0" /></radialGradient>
          <radialGradient id="ballDark" cx=".35" cy=".35" r=".7"><stop offset="0" stopColor="#b8ccff" /><stop offset=".5" stopColor="#3563d8" /><stop offset="1" stopColor="#0a2a94" /></radialGradient>
          <linearGradient id="sheet" x1="0" x2="1"><stop offset="0" stopColor="#5577ea" /><stop offset=".5" stopColor="#a9bcfb" /><stop offset="1" stopColor="#4a6ce6" /></linearGradient>
          <linearGradient id="plate" x2="1" y2="1"><stop offset="0" stopColor="#fff" /><stop offset="1" stopColor="#c8c8c8" /></linearGradient>
          <linearGradient id="plateBlue" x2="1" y2="1"><stop offset="0" stopColor="#b5c4ff" /><stop offset="1" stopColor="#5274f0" /></linearGradient>
          <radialGradient id="pearl" cx=".4" cy=".4" r=".6"><stop offset="0" stopColor="#fff" /><stop offset="1" stopColor="#cfcfcf" /></radialGradient>
          <radialGradient id="flame" cx=".1" cy="1" r="1.100"><stop offset="0" stopColor="#ffc400" /><stop offset=".5" stopColor="#ff8a12" /><stop offset="1" stopColor="#e8300c" /></radialGradient>
          <linearGradient id="gold" x2="1" y2="1"><stop offset="0" stopColor="#ffec94" /><stop offset="1" stopColor="#e0a21c" /></linearGradient>
          <linearGradient id="body" x2="0" y2="1"><stop offset="0" stopColor="#4a5058" /><stop offset="1" stopColor="#14171b" /></linearGradient>
        </defs>
      </Defs>
      <TopRule />
      <TabStrip>
        <Tabs>{tabs.map(([n, w]) => <TopTab key={n} name={n} w={w} on={n === 'Curve Tools'} />)}</Tabs>
        <GearSlot><Gear /></GearSlot>
      </TabStrip>
      <Toolbar>
        {toolGroups.map((grp, i) => (
          <React.Fragment key={i}>
            {i > 0 && <Divider />}
            {grp.map((t, j) => <React.Fragment key={j}>{t}</React.Fragment>)}
          </React.Fragment>
        ))}
      </Toolbar>
      <Main>
        <Palette>
          <Grip $w="98px" />
          <PaletteGrid>{palette.map((t, j) => <React.Fragment key={j}>{t}</React.Fragment>)}</PaletteGrid>
        </Palette>
        <Viewport>
          <Scene />
          <ViewTitle>
            <Fit w={44}>Top</Fit>
            <Arrow><svg width={14} height={8}><path d="M0 0H14L7 7.500Z" /></svg></Arrow>
          </ViewTitle>
        </Viewport>
        <Panel>
          <Grip $w="100%" />
          <PanelTabs>
            {PanelIcon.map((ic, i) => (
              <PanelTab key={i} $z={i === 0 ? 12 : 8 - i}>
                <svg width={85} height={43} viewBox={`${tabX[i]} 48 255 129`}>
                  <path d={`M${tabX[i] + 1.500} ${i === 0 ? 178 : 174}V66L${tabX[i] + 16} 50H${tabX[i] + 118}Q${tabX[i] + 126} 52 ${tabX[i] + 134} 60L${tabX[i] + 238} 162Q${tabX[i] + 246} 172 ${tabX[i] + 254} ${i === 0 ? 178 : 174}`} fill={i === 0 ? face : '#d7d7d7'} stroke={edge} strokeWidth={3} />
                  {ic}
                </svg>
              </PanelTab>
            ))}
            <PanelGear>
              <svg width={28} height={28} viewBox="0 0 28 28">
                <circle cx={14} cy={14} r={7.500} fill="none" stroke="#b6b6b6" strokeWidth={5.600} />
                {[0, 45, 90, 135, 180, 225, 270, 315].map(t => <rect key={t} x={11.500} y={0.5} width={5} height={5} fill="#b6b6b6" transform={`rotate(${t} 14 14)`} />)}
              </svg>
            </PanelGear>
          </PanelTabs>
          <PanelBody>
            <Modes>
              <Mode $on>
                <svg width={48} height={48} viewBox="99 192 144 144">
                  <path d="M114 250Q116 238 130 236L134 226L156 224L162 234L170 218H202L210 234L228 240Q234 246 234 256L232 302Q230 308 220 308H124Q114 306 114 296Z" fill="url(#body)" />
                  <path d="M118 252Q118 242 130 240V300Q118 302 118 294Z" fill="#7d838b" />
                  <path d="M170 230H206" stroke="#777e88" strokeWidth={4} />
                  <circle cx={186} cy={276} r={38} fill="#15181c" />
                  <circle cx={186} cy={276} r={30} fill="#20252b" stroke="#cfd2d6" strokeWidth={6} />
                  <circle cx={186} cy={276} r={20} fill="#1c2a2c" stroke="#6b7178" strokeWidth={4} />
                  <path d="M178 268Q190 262 196 276Q192 288 182 284Z" fill="#4d7a62" />
                </svg>
              </Mode>
              <Mode>
                <svg width={48} height={48} viewBox="261 192 144 144">
                  <rect x={265} y={202} width={137} height={123} fill="#c9c9c9" stroke="#111" strokeWidth={5} />
                  <rect x={278} y={219} width={112} height={89} fill="#e4f2fa" stroke="#3db4ec" strokeWidth={5} />
                  <rect x={288} y={230} width={92} height={67} fill="#fff" stroke="#e40f0f" strokeWidth={6} />
                </svg>
              </Mode>
            </Modes>
            <Sheet>
              {sections.map(s => (
                <React.Fragment key={s.name}>
                  <Heading $h={s.h}><Fit w={s.w}>{s.name}</Fit></Heading>
                  {s.rows.map(r => <Property key={r.k} r={r} />)}
                </React.Fragment>
              ))}
            </Sheet>
          </PanelBody>
        </Panel>
      </Main>
    </Window>
  );
}
